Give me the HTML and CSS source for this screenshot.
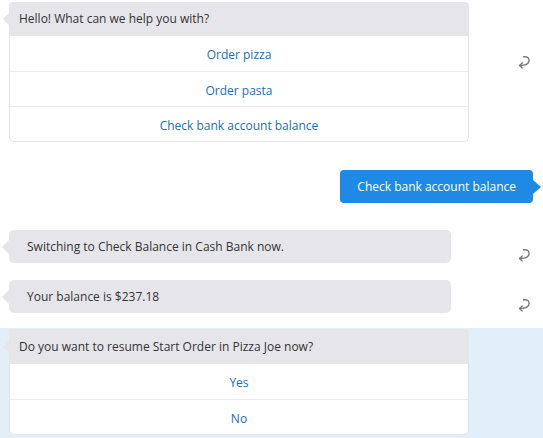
FILE: index.html
```html
<!DOCTYPE html>
<html>
<head>
<meta charset="utf-8">
<link rel="stylesheet" href="styles.css">
</head>
<body>
<div class="chat">
  <div class="row bot row-card">
    <div class="card">
      <div class="card-head">Hello! What can we help you with?</div>
      <div class="opt">Order pizza</div>
      <div class="opt">Order pasta</div>
      <div class="opt">Check bank account balance</div>
    </div>
    <svg class="reply reply-top" viewBox="0 0 14 14" width="14" height="14"><path d="M6.5 1.8 C10.5 1.2 12.4 3 12 6.2 C11.6 9.4 8.5 10.6 2.6 10.5" fill="none" stroke="#7a7a7a" stroke-width="1.4" stroke-linecap="round"/><path d="M5.2 7.9 L2.6 10.5 L5.2 13" fill="none" stroke="#7a7a7a" stroke-width="1.4" stroke-linecap="round" stroke-linejoin="round"/></svg>
  </div>

  <div class="row user">
    <div class="bubble-user">Check bank account balance</div>
  </div>

  <div class="row bot row-b2">
    <div class="bubble">Switching to Check Balance in Cash Bank now.</div>
    <svg class="reply" viewBox="0 0 14 14" width="14" height="14"><path d="M6.5 1.8 C10.5 1.2 12.4 3 12 6.2 C11.6 9.4 8.5 10.6 2.6 10.5" fill="none" stroke="#7a7a7a" stroke-width="1.4" stroke-linecap="round"/><path d="M5.2 7.9 L2.6 10.5 L5.2 13" fill="none" stroke="#7a7a7a" stroke-width="1.4" stroke-linecap="round" stroke-linejoin="round"/></svg>
  </div>

  <div class="row bot row-b3">
    <div class="bubble">Your balance is $237.18</div>
    <svg class="reply" viewBox="0 0 14 14" width="14" height="14"><path d="M6.5 1.8 C10.5 1.2 12.4 3 12 6.2 C11.6 9.4 8.5 10.6 2.6 10.5" fill="none" stroke="#7a7a7a" stroke-width="1.4" stroke-linecap="round"/><path d="M5.2 7.9 L2.6 10.5 L5.2 13" fill="none" stroke="#7a7a7a" stroke-width="1.4" stroke-linecap="round" stroke-linejoin="round"/></svg>
  </div>

  <div class="highlight">
    <div class="row bot">
      <div class="card card-last">
        <div class="card-head">Do you want to resume Start Order in Pizza Joe now?</div>
        <div class="opt">Yes</div>
        <div class="opt">No</div>
      </div>
    </div>
  </div>
</div>
</body>
</html>
```

FILE: styles.css
```css
html, body {
  margin: 0;
  padding: 0;
  background: #ffffff;
}
body {
  font-family: "Open Sans", "Noto Sans", "Liberation Sans", sans-serif;
  font-size: 12px;
  color: #333333;
}
.chat {
  display: flex;
  flex-direction: column;
  padding-top: 2px;
}
.row {
  display: flex;
  align-items: flex-start;
}
.bot {
  padding-left: 9px;
}
.user {
  justify-content: flex-end;
  padding-right: 10px;
  margin-top: 28px;
}
.row-b2 {
  margin-top: 27px;
}
.row-b3 {
  margin-top: 17px;
}
.card {
  position: relative;
  width: 460px;
  box-sizing: border-box;
  border: 1px solid #e4e4e8;
  border-radius: 5px;
  background: #ffffff;
}
.card::before, .bubble::before {
  content: "";
  position: absolute;
  left: -7px;
  top: 50%;
  margin-top: -7px;
  border-style: solid;
  border-width: 7px 7px 7px 0;
  border-color: transparent #e6e6ea transparent transparent;
}
.card::before {
  top: 16px;
  margin-top: -7px;
}
.card-head {
  background: #e6e6ea;
  border-radius: 4px 4px 0 0;
  margin: -1px -1px 0 -1px;
  height: 34px;
  line-height: 33px;
  padding-left: 10px;
}
.card-last .card-head {
  height: 35px;
  line-height: 35px;
}
.card-last::before {
  top: 17px;
}
.opt {
  height: 34px;
  line-height: 38px;
  text-align: center;
  color: #1b6db5;
  border-top: 1px solid #ebebeb;
}
.card-head + .opt {
  border-top: none;
  height: 35px;
}
.bubble {
  position: relative;
  width: 442px;
  box-sizing: border-box;
  background: #e6e6ea;
  border-radius: 5px;
  height: 33px;
  line-height: 33px;
  padding-left: 18px;
}
.bubble-user {
  position: relative;
  background: #1e8ae6;
  color: #ffffff;
  border-radius: 4px;
  height: 33px;
  line-height: 33px;
  padding: 0 17px;
  font-size: 12px;
}
.bubble-user::after {
  content: "";
  position: absolute;
  right: -8px;
  top: 50%;
  margin-top: -7px;
  border-style: solid;
  border-width: 7px 0 7px 8px;
  border-color: transparent transparent transparent #1e8ae6;
}
.reply {
  margin-left: auto;
  margin-right: 12px;
  align-self: flex-end;
  margin-bottom: 1px;
}
.reply-top {
  align-self: flex-start;
  margin-top: 53px;
  margin-bottom: 0;
}
.highlight {
  background: #e3eff8;
  margin-top: 15px;
  padding-top: 1px;
  padding-bottom: 8px;
}
```
